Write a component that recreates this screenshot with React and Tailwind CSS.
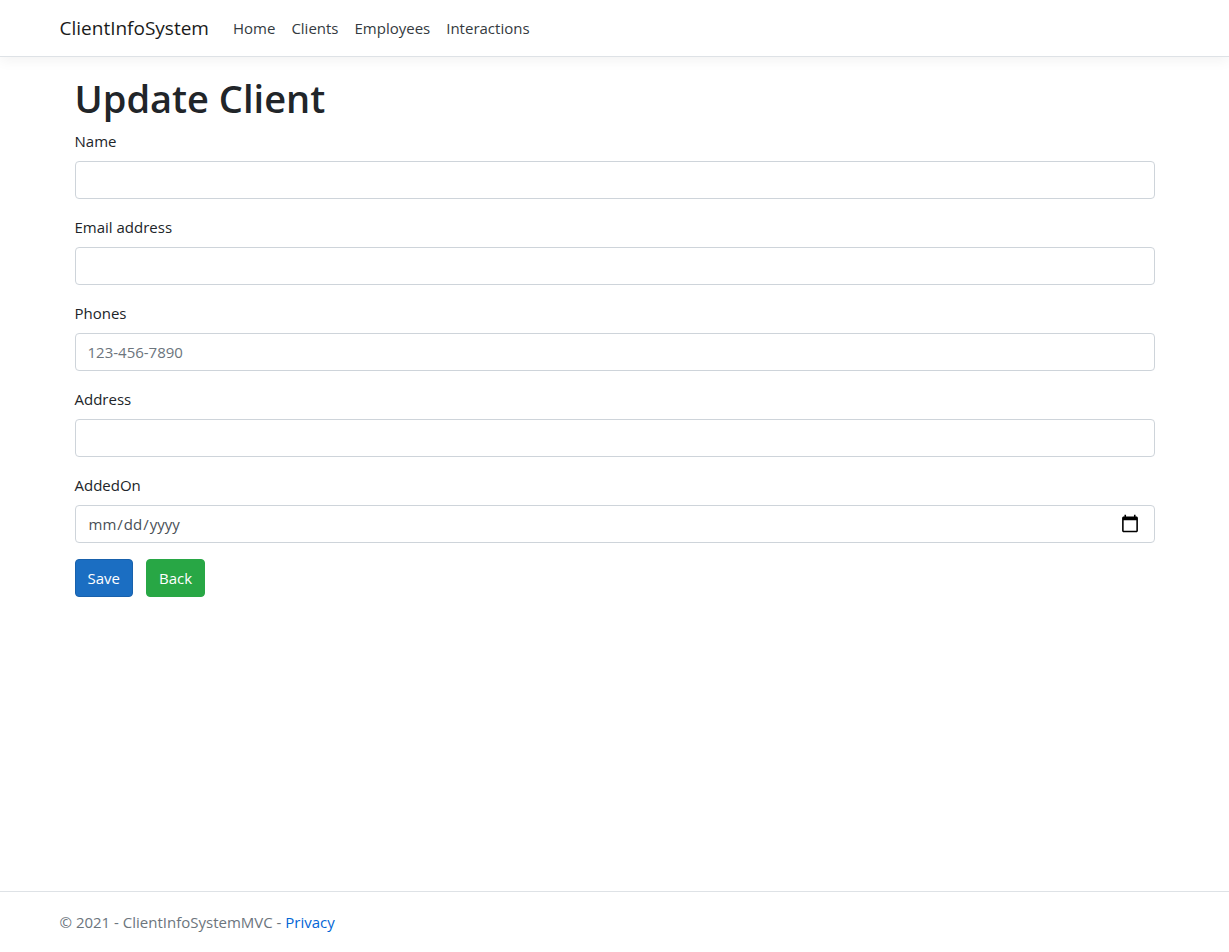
const navLinks = ["Home", "Clients", "Employees", "Interactions"];

const fields = [
  { id: "name", label: "Name", type: "text" },
  { id: "email", label: "Email address", type: "email" },
  { id: "phones", label: "Phones", type: "tel", placeholder: "123-456-7890" },
  { id: "address", label: "Address", type: "text" },
  { id: "addedOn", label: "AddedOn", type: "date" },
];

function Field({ id, label, type, placeholder }) {
  return (
    <div className="mb-4">
      <label htmlFor={id} className="mb-2 block">
        {label}
      </label>
      <input
        id={id}
        name={id}
        type={type}
        placeholder={placeholder}
        className="block h-[38px] w-full rounded border border-[#ced4da] bg-white px-3 py-1.5 text-[#495057] placeholder:text-[#6c757d] [&::-webkit-calendar-picker-indicator]:size-5"
      />
    </div>
  );
}

export default function App() {
  return (
    <div className="flex min-h-screen flex-col bg-white font-['Open_Sans','Noto_Sans',sans-serif] text-[15px] leading-6 text-[#212529]">
      <header className="border-b border-[#dee2e6] shadow-[0_4px_12px_rgba(0,0,0,0.05)]">
        <nav className="mx-auto flex h-14 max-w-[1140px] items-center px-[15px]">
          <a href="#" className="mr-4 text-[19px] leading-[30px] text-[#1a1a1a]">
            ClientInfoSystem
          </a>
          <ul className="flex">
            {navLinks.map((link) => (
              <li key={link}>
                <a href="#" className="block px-2 py-2 text-[#343a40]">
                  {link}
                </a>
              </li>
            ))}
          </ul>
        </nav>
      </header>

      <main className="mx-auto w-full max-w-[1140px] grow px-[30px] pt-[18px] pb-4">
        <h1 className="mb-2 text-[38px] leading-[46px] font-semibold">Update Client</h1>
        <form>
          {fields.map((field) => (
            <Field key={field.id} {...field} />
          ))}
          <div className="flex gap-[13px]">
            <button
              type="submit"
              className="h-[38px] rounded border border-[#1861ac] bg-[#1b6ec2] px-3 text-white"
            >
              Save
            </button>
            <button
              type="button"
              className="h-[38px] rounded border border-[#28a745] bg-[#28a745] px-3 text-white"
            >
              Back
            </button>
          </div>
        </form>
      </main>

      <footer className="border-t border-[#dee2e6] text-[#6c757d]">
        <div className="mx-auto h-[60px] max-w-[1140px] px-[15px] leading-[60px]">
          &copy; 2021 - ClientInfoSystemMVC -{" "}
          <a href="#" className="text-[#0366d6]">
            Privacy
          </a>
        </div>
      </footer>
    </div>
  );
}
